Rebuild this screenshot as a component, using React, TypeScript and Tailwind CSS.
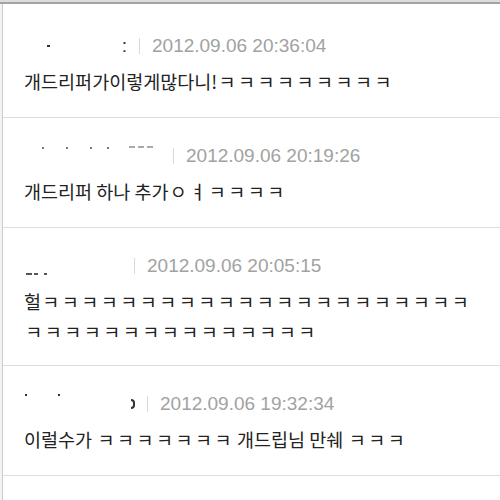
const comments = [
  {
    time: '2012.09.06 20:36:04',
    lines: ['개드리퍼가이렇게많다니!ㅋㅋㅋㅋㅋㅋㅋㅋㅋ'],
    nameWidth: 103,
    first: true,
  },
  {
    time: '2012.09.06 20:19:26',
    lines: ['개드리퍼 하나 추가ㅇㅕㅋㅋㅋㅋ'],
    nameWidth: 137,
  },
  {
    time: '2012.09.06 20:05:15',
    lines: ['헐ㅋㅋㅋㅋㅋㅋㅋㅋㅋㅋㅋㅋㅋㅋㅋㅋㅋㅋㅋㅋㅋㅋ', 'ㅋㅋㅋㅋㅋㅋㅋㅋㅋㅋㅋㅋㅋㅋㅋ'],
    nameWidth: 98,
    tall: true,
  },
  {
    time: '2012.09.06 19:32:34',
    lines: ['이럴수가 ㅋㅋㅋㅋㅋㅋㅋ 개드립님 만쉐 ㅋㅋㅋ'],
    nameWidth: 111,
  },
];

// loose jamo (ㅋ, ㅇ, ㅕ) are full-width in the original font
function Body({ text }: { text: string }) {
  return (
    <div className="whitespace-nowrap">
      {Array.from(text).map((ch, i) => {
        const code = ch.charCodeAt(0);
        if (code >= 0x3131 && code <= 0x318e) {
          return (
            <span key={i} className="inline-block w-[19.5px] text-center">
              {ch}
            </span>
          );
        }
        return <span key={i}>{ch === ' ' ? '\u00a0' : ch}</span>;
      })}
    </div>
  );
}

// blurred nicknames: only a few specks survive
function Name({ index, width }: { index: number; width: number }) {
  return (
    <div className="flex h-[22px] shrink-0 items-start" style={{ width }}>
      {index === 0 && (
        <>
          <span className="ml-[23px] mt-[10px] h-[2px] w-[3px] bg-[#333]" />
          <span className="ml-auto text-[#333]">:</span>
        </>
      )}
      {index === 1 && (
        <>
          <span className="ml-[18px] mt-[2px] h-[2px] w-[2px] bg-[#777]" />
          <span className="ml-[22px] mt-[2px] h-[2px] w-[2px] bg-[#777]" />
          <span className="ml-[22px] mt-[2px] h-[2px] w-[2px] bg-[#777]" />
          <span className="ml-[15px] mt-[2px] h-[2px] w-[2px] bg-[#777]" />
          <span className="ml-[20px] mt-[1px] h-[2px] w-[6px] bg-[#aaa]" />
          <span className="ml-[3px] mt-[1px] h-[2px] w-[6px] bg-[#aaa]" />
          <span className="ml-[3px] mt-[1px] h-[2px] w-[6px] bg-[#aaa]" />
        </>
      )}
      {index === 2 && (
        <>
          <span className="ml-[2px] mt-[18px] h-[2px] w-[6px] bg-[#555]" />
          <span className="ml-[2px] mt-[18px] h-[2px] w-[4px] bg-[#555]" />
          <span className="ml-[6px] mt-[18px] h-[2px] w-[3px] bg-[#555]" />
        </>
      )}
      {index === 3 && (
        <>
          <span className="ml-[1px] mt-[1px] h-[2px] w-[2px] bg-[#333]" />
          <span className="ml-[31px] mt-[1px] h-[2px] w-[2px] bg-[#333]" />
          <span className="ml-auto mt-[6px] h-[10px] w-[4px] rounded-r-full border-2 border-l-0 border-[#333]" />
        </>
      )}
    </div>
  );
}

export default function App() {
  return (
    <div className="h-[500px] w-[500px] overflow-hidden bg-white">
      <div className="h-[2px] bg-[#dcdcdc]" />
      <div className="h-[2px] bg-[#a3a3a3]" />
      <div className="h-[496px] bg-[#f3f3f3] pl-[2px]">
        <div className="h-full border-l border-[#cdcdcd] bg-white">
          {comments.map((c, i) => (
            <div
              key={i}
              className={`border-b border-[#dedede] pl-[21px] pr-[20px] ${c.first ? 'pt-[31px]' : 'pt-[27px]'} ${c.tall ? 'pb-[19px]' : 'pb-[21px]'}`}
            >
              <div className="flex h-[22px] items-center font-['Liberation_Sans',Arial,sans-serif] text-[19px] leading-[22px]">
                <Name index={i} width={c.nameWidth} />
                <span className="mx-3 h-[16px] w-px shrink-0 bg-[#d9d9d9]" />
                <span className="text-[#a2a2a2]">{c.time}</span>
              </div>
              <div className="mt-[9px] font-['Noto_Sans_CJK_KR','Noto_Sans',sans-serif] text-[18.5px] leading-[30px] text-[#222]">
                {c.lines.map((l, j) => (
                  <Body key={j} text={l} />
                ))}
              </div>
            </div>
          ))}
        </div>
      </div>
    </div>
  );
}
